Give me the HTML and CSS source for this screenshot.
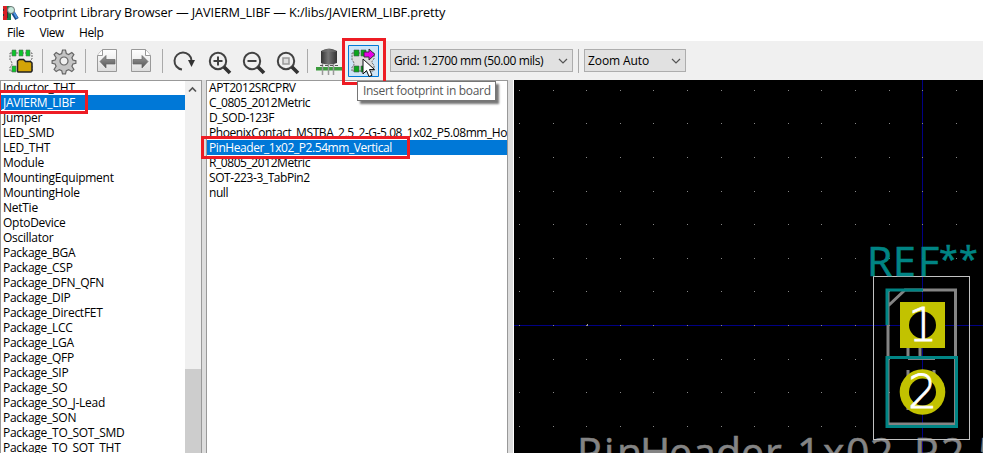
FILE: index.html
```html
<!DOCTYPE html>
<html lang="en">
<head>
<meta charset="utf-8">
<title>Footprint Library Browser</title>
<link rel="stylesheet" href="styles.css">
</head>
<body>
<header class="titlebar">
<svg class="app-icon" width="16" height="16" viewBox="0 0 16 16"><path fill="#d82025" d="M0 1h4v14H0z"/><path fill="#178048" d="M4 1h4v14H4z"/><path fill="#333" d="M0 4h1v2H0zM0 9h1v2H0zM4 3h1v10H4z"/><path d="m9 6 5 8" stroke="#174a86" stroke-width="4"/><path d="m10 6 4 7" stroke="#4b91df" stroke-width="2"/><circle cx="8" cy="5" r="3.5" fill="#c7e9dc" stroke="#6b7775"/></svg>
<span class="title">Footprint Library Browser — JAVIERM_LIBF — K:/libs/JAVIERM_LIBF.pretty</span>
</header>
<nav class="menu"><span>File</span><span>View</span><span>Help</span></nav>
<svg width="0" height="0" class="defs"><defs>
<linearGradient id="pg" x2="0" y2="1"><stop stop-color="#fff"/><stop offset="1" stop-color="#ddd"/></linearGradient>
<linearGradient id="arrow" x2="0" y2="1"><stop stop-color="#999"/><stop offset="1" stop-color="#555"/></linearGradient>
<linearGradient id="cap"><stop stop-color="#333"/><stop offset=".45" stop-color="#777"/><stop offset="1" stop-color="#333"/></linearGradient>
</defs></svg>
<div class="toolbar">
<svg width="385" height="39" viewBox="0 41 385 39">
<g fill="none" stroke="#aaa"><path d="M42.5 49v24M85.500 49v24M162.500 49v24M307.500 49v24"/></g>
<path d="M10 53h22v6q-4 3 0 6v6H10v-4q4-3 0-7z" fill="#eee" stroke="#666" stroke-dasharray="2 1"/>
<g fill="#0bc52b" stroke="#5b6d5d" stroke-width=".6"><path d="M12 50h4v6h-4zM19 50h4v6h-4zM26 50h4v6h-4zM12 66h4v6h-4z"/></g>
<path d="M17.500 71V61l2-1.500h4l2 2h5l1.500 1.500v8l-1 1h-13z" fill="#d3a407" stroke="#222" stroke-width="1.500"/>
<g transform="translate(64 61)" fill="#c4c4c4" stroke="#666" stroke-width="1.200"><path d="M-1.500-11h3l.8 3.500 2.300 1 3.200-2 2.100 2.100-2 3.200 1 2.300 3 .7v2.500l-3 .7-1 2.300 2 3.200-2.100 2.100-3.200-2-2.300 1-.8 3.200h-3l-.8-3.200-2.300-1-3.200 2-2.100-2.100 2-3.200-1-2.300-3-.7V-.200l3-.7 1-2.300-2-3.200 2.100-2.100 3.200 2 2.300-1z"/><circle r="4" fill="#f0f0f0"/></g>
<g fill="url(#pg)" stroke="#999"><path d="M102.500 49.500h14v22h-19v-16zM131.500 49.500h14l5 6v16h-19z"/><path d="M97.500 55.500h5v-6M150.500 55.500h-5v-6" fill="#fff"/></g>
<path d="m100 61.500 6-6v4h9v4.500h-9v4zM148 61.500l-6-6v4h-9v4.500h9v4z" fill="url(#arrow)" stroke="#666" stroke-width=".7"/>
<g fill="none" stroke="#424242" stroke-width="2"><path d="M182 69.500a8.500 8.500 0 1 1 9.500-9"/><circle cx="218" cy="61" r="8.200"/><circle cx="252" cy="61" r="8.200"/><circle cx="286" cy="61" r="8.200"/><path d="M213.500 61h9M218 56.500v9M247.500 61h9"/></g>
<path d="M188 60h7l-3.500 7z" fill="#333"/>
<path d="m224 67 6 6M258 67l6 6M292 67l6 6" stroke="#333" stroke-width="3.700"/>
<path d="M283 58h6v6h-6z" fill="#ddd" stroke="#999" stroke-width="1.500"/>
<path d="M316 67h27v3.500h-27z" fill="#3b9b3d"/><path d="M322.500 62v13M328.500 62v13M333.500 62v13" stroke="#999" stroke-width="1.500"/><path d="M321 51q8-5 16 0v12q-8 3-16 0z" fill="url(#cap)"/><path d="M322 51h14" stroke="#777"/><path d="M320 65.500h18" stroke="#555" stroke-dasharray="3 2"/>
<path d="M348.500 45.500h30v31h-30z" fill="#cde4f7" stroke="#0078d7"/>
<path d="M352 53h22v6q-4 3 0 6v6h-22v-4q4-3 0-7z" fill="#ddd" stroke="#666" stroke-dasharray="2 1"/>
<path d="M354 50h5v6h-5zM361 50h5v6h-5zM354 66h5v6h-5zM361 66h5v6h-5z" fill="#0ba51b" stroke="#455" stroke-width=".6"/>
<path d="M364 52h5v-3l6 5.500-6 5.500v-3h-5z" fill="#e600e6" stroke="#333"/>
</svg>
<div class="select grid"><span class="grid-name">Grid: 1.2700 mm (50.00 mils)</span><svg width="10" height="6"><path d="m1 1 4 4 4-4" fill="none" stroke="#555" stroke-width="1.200"/></svg></div>
<i class="sep"></i>
<div class="select zoom"><span class="zoom-name">Zoom Auto</span><svg width="10" height="6"><path d="m1 1 4 4 4-4" fill="none" stroke="#555" stroke-width="1.200"/></svg></div>
</div>
<main class="panes">
<section class="libraries">
<ul><li>Inductor_THT</li><li class="selected">JAVIERM_LIBF</li><li>Jumper</li><li>LED_SMD</li><li>LED_THT</li><li>Module</li><li>MountingEquipment</li><li>MountingHole</li><li>NetTie</li><li>OptoDevice</li><li>Oscillator</li><li>Package_BGA</li><li>Package_CSP</li><li>Package_DFN_QFN</li><li>Package_DIP</li><li>Package_DirectFET</li><li>Package_LCC</li><li>Package_LGA</li><li>Package_QFP</li><li>Package_SIP</li><li>Package_SO</li><li>Package_SO_J-Lead</li><li>Package_SON</li><li>Package_TO_SOT_SMD</li><li>Package_TO_SOT_THT</li></ul>
<div class="scroll"><svg width="15" height="17"><path d="m4 10.500 3.500-3.500 3.500 3.500" fill="none" stroke="#555" stroke-width="1.700"/></svg><div class="thumb"></div></div>
</section>
<section class="footprints"><ul><li>APT2012SRCPRV</li><li>C_0805_2012Metric</li><li>D_SOD-123F</li><li>PhoenixContact_MSTBA_2,5_2-G-5,08_1x02_P5.08mm_Horizontal</li><li class="selected">PinHeader_1x02_P2.54mm_Vertical</li><li>R_0805_2012Metric</li><li>SOT-223-3_TabPin2</li><li>null</li></ul></section>
<section class="canvas">
<svg width="470" height="373" viewBox="513 80 470 373">
<path d="M513 325.500h470M922.500 80v373" stroke="#000084" shape-rendering="crispEdges"/>
<g id="dots" fill="#888" shape-rendering="crispEdges"></g>
<path d="M587 324h1v2h-1z" fill="#999"/>
<text class="value" y="466.500" x="577 604 617 640 669 693 716 741 765 780 797 823 846 870 888 914 941 965 978">PinHeader_1x02_P2.5</text>
<g fill="none" stroke="#848484" stroke-width="3"><path d="M888 306l17-16h50.500v134h-67.500V290M908 345v13M920 345v13M908 370v40M934 370v40M908 358.500h27"/></g>
<path d="M873.500 276.500h96v163h-96z" fill="none" stroke="#c2c2c2" shape-rendering="crispEdges"/>
<path d="M887 325v-35h36M887 357.500h69.500v69H887z" fill="none" stroke="#008484" stroke-width="3"/>
<text class="reference" y="276" x="867 893 918">REF<tspan class="stars" y="271" x="939 959">**</tspan></text>
<path d="M900 302h45v46h-45z" fill="#c2c200"/><circle cx="922.500" cy="392" r="22.800" fill="#c2c200"/><circle cx="922.500" cy="325" r="13.500"/><circle cx="922.500" cy="392" r="13.500"/>
<text class="pad" x="908" y="341">1</text><text class="pad" x="908" y="408">2</text>
</svg>
</section>
</main>
<div class="mark mark-library"></div><div class="mark mark-footprint"></div><div class="mark mark-insert"></div>
<div class="tooltip">Insert footprint in board</div>
<svg class="cursor" width="14" height="20" viewBox="0 0 14 20"><path d="M1 1v15l3.500-3.500 2.500 6 3-1.200-2.500-5.800h5z" fill="#fff" stroke="#111"/></svg>
<script src="grid.js"></script>
</body>
</html>
```
FILE: styles.css
```css
*{box-sizing:border-box}
body{margin:0;width:983px;height:453px;overflow:hidden;position:relative;background:#fff;color:#000;font:12px/15px "Open Sans","Noto Sans",sans-serif;display:flex;flex-direction:column}
.defs{position:absolute}
svg{display:block;flex:none}
.titlebar{height:25px;display:flex;align-items:center;padding-left:3px;gap:4px}
.title{font-size:12.75px;letter-spacing:-.12px;white-space:nowrap}
.menu{height:16px;display:flex;gap:15px;padding-left:7px;letter-spacing:-.4px}
.toolbar{height:39px;background:#f0f0f0;display:flex;align-items:center}
.toolbar>svg{width:385px}
.select{height:23px;border:1px solid #adadad;background:#e1e1e1;display:flex;align-items:center;justify-content:space-between;padding:0 4px 0 3px;white-space:nowrap}
.grid{width:183px;margin-left:5px}
.grid-name{letter-spacing:-.38px}
.zoom-name{letter-spacing:-.1px}
.zoom{width:102px}
.sep{width:1px;height:24px;background:#aaa;margin:0 5px}
.panes{height:373px;display:flex;background:#ddd}
ul{list-style:none;margin:0;padding:0;min-width:0;flex:1;overflow:hidden}
li{height:15px;line-height:15px;padding-left:2px;white-space:nowrap;letter-spacing:-.26px}
.selected{background:#0078d7;color:#fff}
.libraries{width:202px;border:1px solid #999;border-bottom:0;background:#fff;display:flex;overflow:hidden}
.libraries ul{margin-top:-1px}
.scroll{width:16px;background:#f0f0f0}
.thumb{height:90px;margin-top:271px;background:#cdcdcd}
.footprints{width:302px;margin-left:4px;border:1px solid #999;border-bottom:0;background:#fff;display:flex;overflow:hidden}
.footprints ul{margin-top:-1px}
.footprints li{letter-spacing:-.43px}
.canvas{width:470px;margin-left:5px;border-left:1px solid #fff;background:#000}
.canvas svg{margin-left:-1px;clip-path:inset(0 0 0 1px)}
.value,.reference{font-family:"Open Sans",sans-serif;font-size:41px;stroke-width:.6px}
.value{fill:#848484;stroke:#848484}
.reference{fill:#008484;stroke:#008484}
.stars{font-size:34px}
.pad{font-family:"DejaVu Sans",sans-serif;font-size:46px;font-weight:200;fill:#fff;stroke:#fff;stroke-width:.8px}
.mark{position:absolute;border:3px solid #ed1c24}
.mark-library{left:-2px;top:90px;width:90px;height:24px}
.mark-footprint{left:201px;top:136px;width:209px;height:23px}
.mark-insert{left:342px;top:38px;width:44px;height:47px}
.tooltip{position:absolute;left:357px;top:81px;width:139px;height:20px;border:1px solid #767676;background:#fff;color:#575757;padding:1px 0 0 5px;letter-spacing:-.3px;white-space:nowrap;box-shadow:3px 3px 2px #777}
.cursor{position:absolute;left:362px;top:58px}
```
FILE: grid.js
```js
const dots = document.getElementById('dots');
for (let row = 0; row < 11; row++) {
  for (let col = 0; col < 14; col++) {
    const dot = document.createElementNS('http://www.w3.org/2000/svg', 'rect');
    dot.setAttribute('x', Math.round(519 + col * 33.6));
    dot.setAttribute('y', Math.round(90 + row * 33.6 - 0.3));
    dot.setAttribute('width', 1);
    dot.setAttribute('height', 1);
    dots.append(dot);
  }
}
```
